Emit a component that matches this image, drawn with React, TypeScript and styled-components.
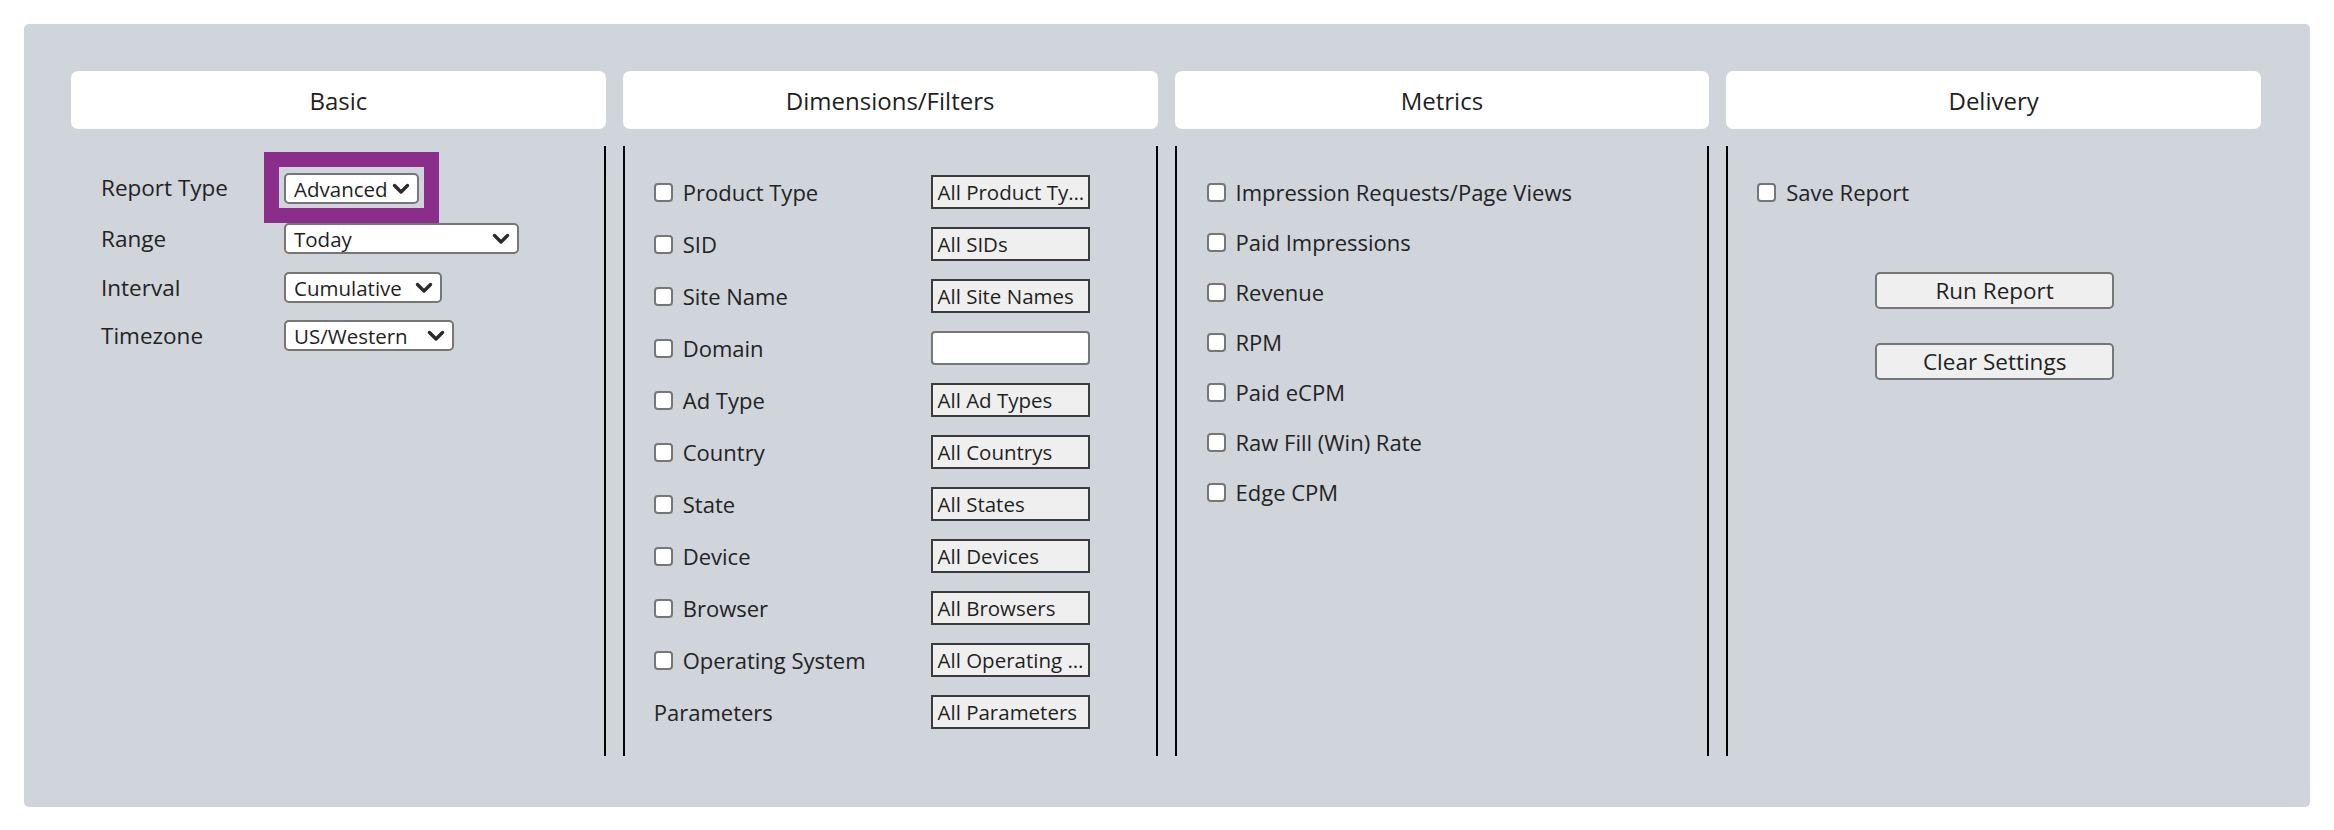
import React, { FC } from "react";
import styled, { createGlobalStyle } from "styled-components";

const GlobalStyle = createGlobalStyle`
  body {
    margin: 0;
    background: #fff;
    font-family: "Open Sans", "Liberation Sans", sans-serif;
    color: #232323;
  }
  * {
    box-sizing: border-box;
  }
`;

const Page = styled.div`
  padding: 24px 24px 23px;
`;

const Panel = styled.div`
  display: grid;
  grid-template-columns: repeat(4, 1fr);
  grid-template-rows: 58px 610px;
  gap: 17px;
  padding: 47px 49px 51px 47px;
  background: #d0d4db;
  border-radius: 5px;
`;

const Tab = styled.div`
  display: flex;
  align-items: center;
  justify-content: center;
  background: #fff;
  border-radius: 7px;
  font-size: 24px;
  color: #1f1f1f;
`;

const Section = styled.div<{ $left?: boolean; $right?: boolean }>`
  border-left: ${(p) => (p.$left ? "2px solid #000" : "none")};
  border-right: ${(p) => (p.$right ? "2px solid #000" : "none")};
`;

const BasicSection = styled(Section)`
  padding: 6px 0 0 30px;
`;

const FieldRow = styled.div<{ $space?: number }>`
  display: flex;
  align-items: center;
  margin-top: ${(p) => p.$space ?? 0}px;
`;

const FieldLabel = styled.span`
  width: 183px;
  font-size: 22.5px;
`;

const Highlight = styled.div`
  margin-left: -20px;
  border: 15px solid #8b2d8b;
  padding: 6px 5px 4px;
`;

const Dropdown = styled.div<{ $width: number }>`
  display: flex;
  align-items: center;
  justify-content: space-between;
  gap: 4px;
  width: ${(p) => p.$width}px;
  height: 31px;
  padding: 0 7px 0 8px;
  background: #fff;
  border: 2px solid #767676;
  border-radius: 5px;
  font-size: 20.5px;
  color: #1f1f1f;
  white-space: nowrap;
`;

const DimensionSection = styled(Section)`
  display: grid;
  grid-template-columns: 1fr 159px;
  grid-auto-rows: 34px;
  row-gap: 18px;
  align-content: start;
  align-items: center;
  padding: 29px 66px 0 29px;
`;

const CheckRow = styled.label`
  display: flex;
  align-items: center;
  gap: 10px;
  font-size: 22px;
`;

const Check = styled.input.attrs({ type: "checkbox" })`
  appearance: none;
  width: 19px;
  height: 19px;
  margin: 0;
  background: #fff;
  border: 2px solid #767676;
  border-radius: 4px;
`;

const PlainLabel = styled.span`
  font-size: 22px;
`;

const FilterBox = styled.div`
  height: 34px;
  padding: 0 3px 0 5px;
  background: #efefef;
  border: 2px solid #3c3c3c;
  font-size: 20.5px;
  line-height: 30px;
  color: #1f1f1f;
  white-space: nowrap;
  overflow: hidden;
  text-overflow: ellipsis;
`;

const TextInput = styled.input`
  width: 159px;
  height: 34px;
  margin: 0;
  background: #fff;
  border: 2px solid #767676;
  border-radius: 4px;
`;

const MetricSection = styled(Section)`
  display: flex;
  flex-direction: column;
  gap: 20px;
  padding: 31px 0 0 30px;
  ${CheckRow} {
    height: 30px;
  }
`;

const DeliverySection = styled(Section)`
  padding-top: 31px;
  ${CheckRow} {
    height: 30px;
    padding-left: 29px;
  }
`;

const Actions = styled.div`
  display: flex;
  flex-direction: column;
  align-items: center;
  gap: 34px;
  margin-top: 65px;
`;

const Button = styled.button`
  width: 239px;
  height: 37px;
  padding: 0;
  background: #efefef;
  border: 2px solid #767676;
  border-radius: 5px;
  font-family: inherit;
  font-size: 22.5px;
  color: #1f1f1f;
`;

const Chevron: FC = () => (
  <svg width="18" height="12" viewBox="0 0 18 12" style={{ flexShrink: 0 }}>
    <path
      d="M2.5 2.5 L9 9 L15.5 2.5"
      fill="none"
      stroke="#2b2b2b"
      strokeWidth="3.4"
      strokeLinecap="round"
      strokeLinejoin="round"
    />
  </svg>
);

const Select: FC<{ value: string; width: number }> = ({ value, width }) => (
  <Dropdown $width={width}>
    <span>{value}</span>
    <Chevron />
  </Dropdown>
);

const filters: [string, string | null][] = [
  ["Product Type", "All Product Types"],
  ["SID", "All SIDs"],
  ["Site Name", "All Site Names"],
  ["Domain", null],
  ["Ad Type", "All Ad Types"],
  ["Country", "All Countrys"],
  ["State", "All States"],
  ["Device", "All Devices"],
  ["Browser", "All Browsers"],
  ["Operating System", "All Operating Systems"],
];

const metrics = [
  "Impression Requests/Page Views",
  "Paid Impressions",
  "Revenue",
  "RPM",
  "Paid eCPM",
  "Raw Fill (Win) Rate",
  "Edge CPM",
];

const App: FC = () => {
  return (
    <Page>
      <GlobalStyle />
      <Panel>
        <Tab>Basic</Tab>
        <Tab>Dimensions/Filters</Tab>
        <Tab>Metrics</Tab>
        <Tab>Delivery</Tab>

        <BasicSection $right>
          <FieldRow>
            <FieldLabel>Report Type</FieldLabel>
            <Highlight>
              <Select value="Advanced" width={135} />
            </Highlight>
          </FieldRow>
          <FieldRow>
            <FieldLabel>Range</FieldLabel>
            <Select value="Today" width={235} />
          </FieldRow>
          <FieldRow $space={18}>
            <FieldLabel>Interval</FieldLabel>
            <Select value="Cumulative" width={158} />
          </FieldRow>
          <FieldRow $space={17}>
            <FieldLabel>Timezone</FieldLabel>
            <Select value="US/Western" width={170} />
          </FieldRow>
        </BasicSection>

        <DimensionSection $left $right>
          {filters.map(([name, all]) => (
            <React.Fragment key={name}>
              <CheckRow>
                <Check />
                {name}
              </CheckRow>
              {all ? <FilterBox>{all}</FilterBox> : <TextInput type="text" />}
            </React.Fragment>
          ))}
          <PlainLabel>Parameters</PlainLabel>
          <FilterBox>All Parameters</FilterBox>
        </DimensionSection>

        <MetricSection $left $right>
          {metrics.map((m) => (
            <CheckRow key={m}>
              <Check />
              {m}
            </CheckRow>
          ))}
        </MetricSection>

        <DeliverySection $left>
          <CheckRow>
            <Check />
            Save Report
          </CheckRow>
          <Actions>
            <Button>Run Report</Button>
            <Button>Clear Settings</Button>
          </Actions>
        </DeliverySection>
      </Panel>
    </Page>
  );
};

export default App;
